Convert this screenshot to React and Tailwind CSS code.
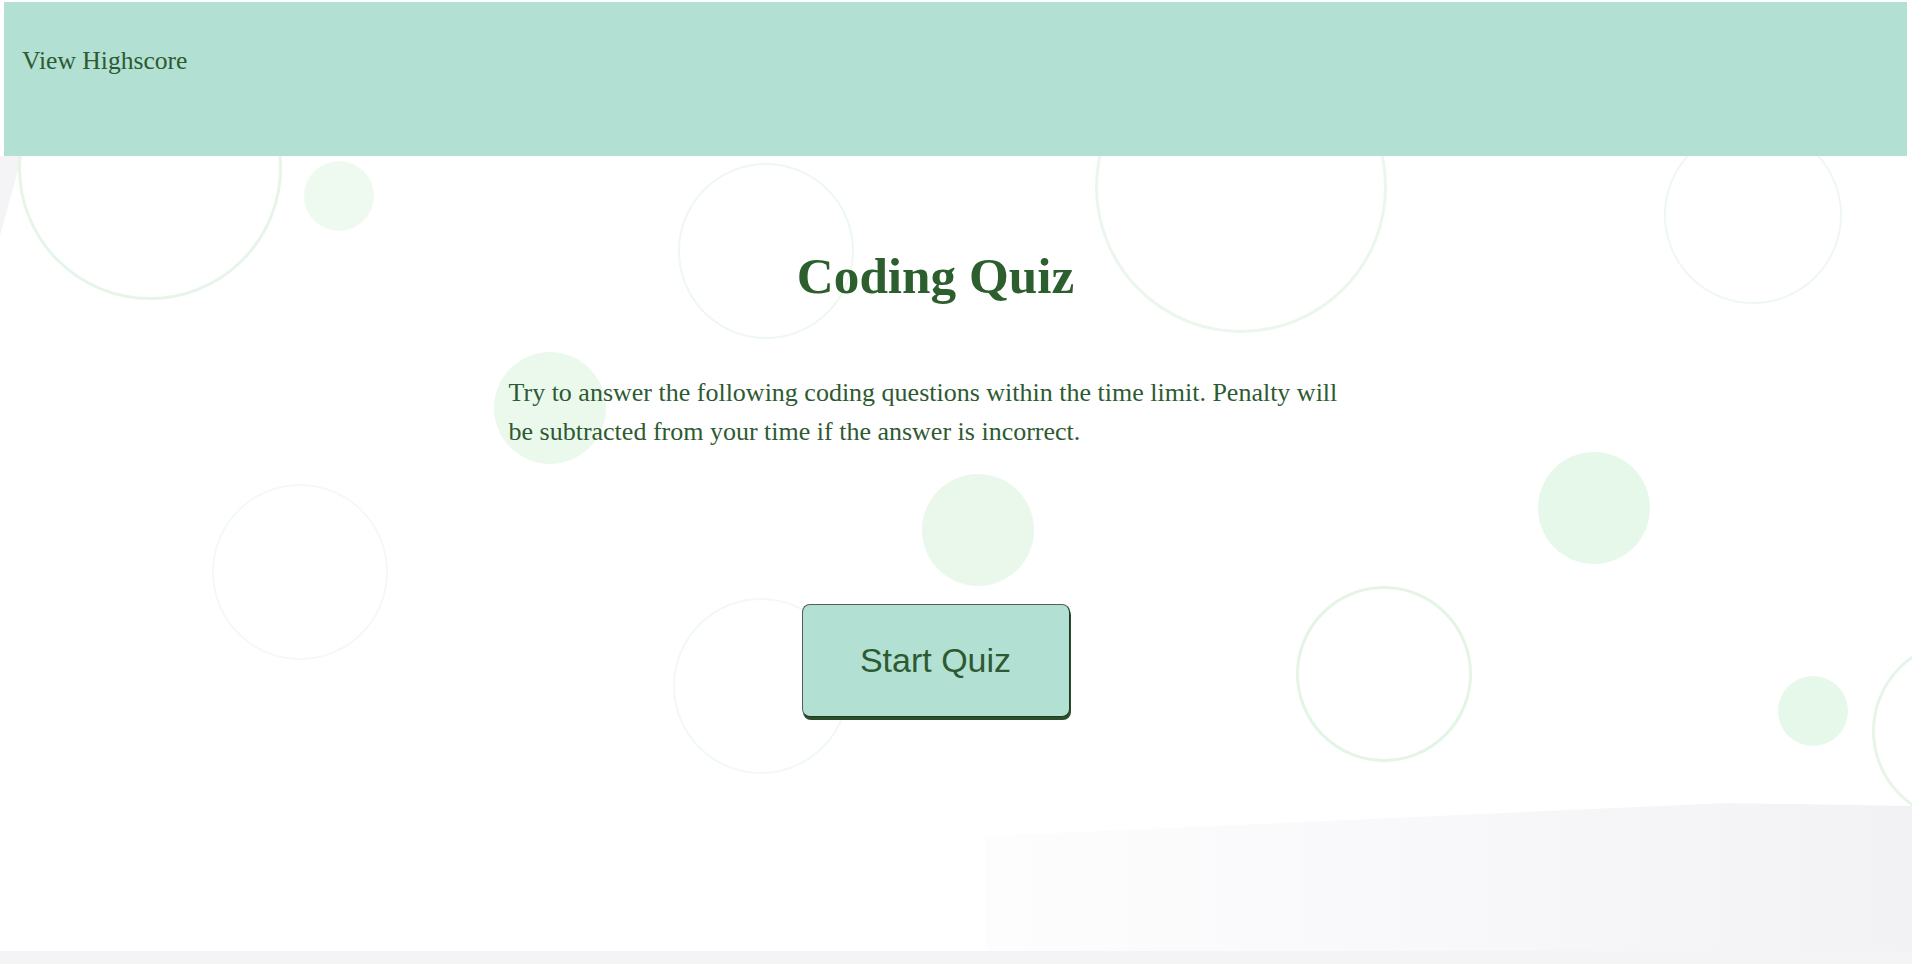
const bubbles = [
  { cls: "left-[18px] top-[36px] w-[264px] h-[264px] border-[3px] border-[#e7f5e9]" },
  { cls: "left-[304px] top-[161px] w-[70px] h-[70px] bg-[#eefaf0]" },
  { cls: "left-[678px] top-[163px] w-[176px] h-[176px] border-2 border-[#eef8ef]" },
  { cls: "left-[1095px] top-[41px] w-[292px] h-[292px] border-[3px] border-[#ebf6ec]" },
  { cls: "left-[1664px] top-[126px] w-[178px] h-[178px] border-2 border-[#eef8ef]" },
  { cls: "left-[494px] top-[352px] w-[112px] h-[112px] bg-[#ebf9ed]" },
  { cls: "left-[212px] top-[484px] w-[176px] h-[176px] border-2 border-[#f2faf3]" },
  { cls: "left-[922px] top-[474px] w-[112px] h-[112px] bg-[#e9f8eb]" },
  { cls: "left-[1538px] top-[452px] w-[112px] h-[112px] bg-[#e6f8e9]" },
  { cls: "left-[673px] top-[598px] w-[176px] h-[176px] border-2 border-[#f1f9f2]" },
  { cls: "left-[1296px] top-[586px] w-[176px] h-[176px] border-[3px] border-[#e4f5e6]" },
  { cls: "left-[1778px] top-[676px] w-[70px] h-[70px] bg-[#e6f8e9]" },
  { cls: "left-[1872px] top-[640px] w-[182px] h-[182px] border-[3px] border-[#e6f5e8]" },
];

function Background() {
  return (
    <div className="absolute inset-0 overflow-hidden">
      {/* grey wedge at the left edge */}
      <div className="absolute left-0 top-[156px] w-[22px] h-[80px] bg-[#f4f4f7] [clip-path:polygon(0_0,100%_0,0_100%)]" />
      {/* soft grey slab bottom right */}
      <div className="absolute left-[985px] top-[800px] w-[927px] h-[151px] bg-gradient-to-r from-[#fdfdfe] via-[#f8f8fa] to-[#f2f2f5] [clip-path:polygon(0_24%,80%_2%,100%_4%,100%_100%,0_100%)]" />
      {bubbles.map((b, i) => (
        <div key={i} className={"absolute rounded-full " + b.cls} />
      ))}
    </div>
  );
}

export default function App() {
  return (
    <div className="min-h-screen bg-[#f4f4f7] font-['Liberation_Serif','Times_New_Roman',serif] text-[#2e5a32]">
      <div className="relative h-[951px] bg-white">
        <Background />

        <div className="relative pt-[2px] pl-[4px] pr-[5px]">
          {/* HEADER */}
          <header className="h-[154px] bg-[#b2e0d2] pl-[18px] pt-[44px]">
            <a href="#" className="text-[25.6px] leading-[1.15] text-[#2e5a32]">
              View Highscore
            </a>
          </header>

          {/* MAIN */}
          <main className="flex justify-center pr-[40px]">
            <div className="w-[854px] flex flex-col">
              <h1 className="mt-[91px] text-center text-[51.2px] leading-[1.15] font-bold text-[#2c5e2e]">
                Coding Quiz
              </h1>

              <p className="mt-[67px] text-[26px] leading-[39px]">
                Try to answer the following coding questions within the time limit. Penalty will be subtracted from your time if the answer is incorrect.
              </p>

              <button className="mt-[153px] mx-auto w-[268px] h-[113px] rounded-[8px] bg-[#b2e0d2] border border-[#5b5b5b] border-r-[#1e3a1f] border-b-[#1e3a1f] shadow-[1px_3px_0_#2a4d2b] font-['Liberation_Sans',Arial,sans-serif] text-[34px] text-[#2e5a32]">
                Start Quiz
              </button>
            </div>
          </main>
        </div>
      </div>
    </div>
  );
}
